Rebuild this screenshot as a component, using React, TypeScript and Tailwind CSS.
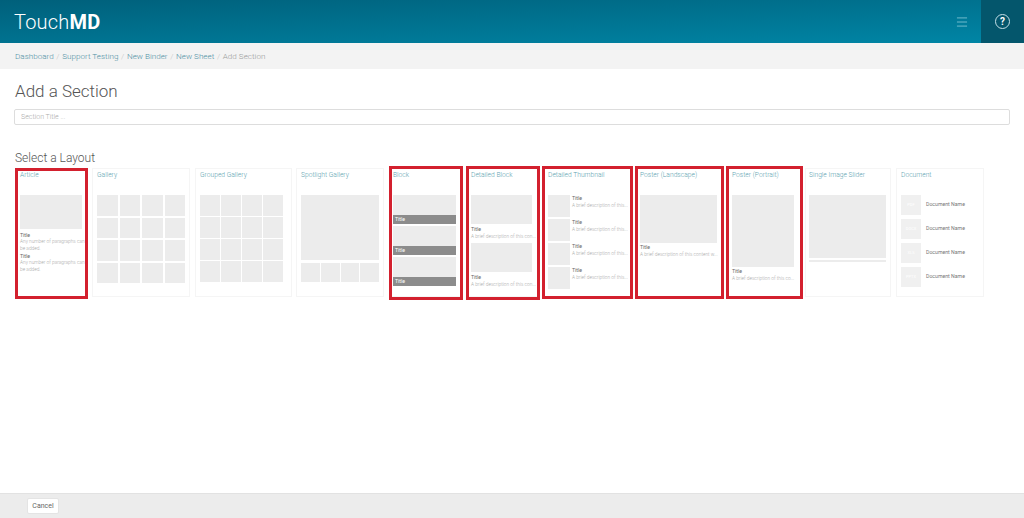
import { Menu } from 'lucide-react';

const font = { fontFamily: 'Roboto, "Liberation Sans", sans-serif' };

function Title({ children }: { children: string }) {
  return <p className="text-[5.2px] leading-[7px] text-[#666]">{children}</p>;
}

function Desc({ children }: { children: string }) {
  return <p className="text-[4.8px] leading-[7px] text-[#aaa] font-light whitespace-nowrap">{children}</p>;
}

function Card({
  name,
  className,
  outline,
  children,
}: {
  name: string;
  className: string;
  outline?: string;
  children?: React.ReactNode;
}) {
  return (
    <div className={`relative shrink-0 h-[129px] border border-[#f5f5f5] bg-white ${className}`}>
      <p className="h-[26px] pt-[1px] text-[6.7px] leading-[10px] font-light text-[#5d9fb0] whitespace-nowrap">{name}</p>
      {children}
      {outline && <div className={`absolute border-[3px] border-[#d3202e] ${outline}`} />}
    </div>
  );
}

const DOC_TYPES = ['PDF', 'DOCX', 'XLS', 'PPTX'];

function GalleryGrid() {
  return (
    <div className="grid grid-cols-4 gap-[2px]">
      {Array.from({ length: 16 }).map((_, i) => (
        <div key={i} className="h-[20.5px] bg-[#ececec]" />
      ))}
    </div>
  );
}

export default function App() {
  const crumbs = ['Dashboard', 'Support Testing', 'New Binder', 'New Sheet'];
  return (
    <div className="h-screen flex flex-col bg-white overflow-hidden" style={font}>
      {/* HEADER */}
      <header className="h-[43px] shrink-0 flex items-center justify-between bg-gradient-to-br from-[#00607b] to-[#0086a6]">
        <div className="pl-[14px] text-[20px] text-white font-light tracking-[0.2px]">
          Touch<span className="font-bold">MD</span>
        </div>
        <div className="flex items-center h-full">
          <Menu size={14} strokeWidth={1.5} className="text-[#7fc3d3] mr-[12px]" />
          <div className="w-[43px] h-full flex items-center justify-center bg-[#04566c]">
            <div className="w-[15px] h-[15px] rounded-full border border-[#c5e0e8] flex items-center justify-center text-[10px] font-bold text-white">
              ?
            </div>
          </div>
        </div>
      </header>

      {/* BREADCRUMB */}
      <nav className="h-[26px] shrink-0 flex items-center px-[15px] bg-[#f3f3f3] text-[8.1px] font-light whitespace-nowrap">
        {crumbs.map((c) => (
          <span key={c} className="flex">
            <span className="text-[#4f90a4]">{c}</span>
            <span className="w-[8.5px] text-center text-[#c4c4c4]">/</span>
          </span>
        ))}
        <span className="text-[#999]">Add Section</span>
      </nav>

      {/* CONTENT */}
      <main className="flex-1 pl-[15px] pr-[14px]">
        <h1 className="pt-[11px] text-[17px] leading-[22px] font-light text-[#555]">Add a Section</h1>
        <input
          placeholder="Section Title ..."
          className="mt-[7px] block w-[996px] -ml-[1px] h-[16px] px-[6px] border border-[#ddd] rounded-[2px] text-[7px] font-light placeholder:text-[#aaa] outline-none"
        />
        <h2 className="mt-[26px] text-[12px] leading-[15px] font-light text-[#555]">Select a Layout</h2>

        <div className="mt-[2px] flex pl-[1px]">
          <Card name="Article" className="w-[72px] mr-[4px] pl-[3px]" outline="-left-[2px] -top-[1px] -right-[1px] -bottom-[3px]">
            <div className="w-[62px] h-[34px] bg-[#ececec] mb-[3px]" />
            <div className="w-[65px]">
              <Title>Title</Title>
              <p className="text-[4.8px] leading-[6.5px] text-[#aaa] font-light">Any number of paragraphs can be added.</p>
              <div className="mt-[1px]">
                <Title>Title</Title>
              </div>
              <p className="text-[4.8px] leading-[6.5px] text-[#aaa] font-light">Any number of paragraphs can be added.</p>
            </div>
          </Card>

          <Card name="Gallery" className="w-[98px] mr-[5px] px-[4px]">
            <GalleryGrid />
          </Card>

          <Card name="Grouped Gallery" className="w-[97px] mr-[4px] pl-[4px] pr-[8px]">
            <div className="grid grid-cols-4 gap-x-[1px] gap-y-[1.5px]">
              {Array.from({ length: 16 }).map((_, i) => (
                <div key={i} className="h-[20.5px] bg-[#ececec]" />
              ))}
            </div>
          </Card>

          <Card name="Spotlight Gallery" className="w-[88px] mr-[7px] px-[4px]">
            <div className="h-[65px] bg-[#ececec]" />
            <div className="mt-[3px] grid grid-cols-4 gap-[1px]">
              {[0, 1, 2, 3].map((i) => (
                <div key={i} className="h-[19px] bg-[#ececec]" />
              ))}
            </div>
          </Card>

          <Card name="Block" className="w-[71px] mr-[4px] pl-[1px] pr-[5px]" outline="-left-[3px] -top-[3px] -right-[2px] -bottom-[4px]">
            <div className="flex flex-col gap-[2px]">
              {[0, 1, 2].map((i) => (
                <div key={i} className="h-[29px] flex flex-col justify-end bg-[#ececec]">
                  <div className="h-[9px] px-[2px] bg-[#8c8c8c] text-[5.2px] leading-[9px] text-white">Title</div>
                </div>
              ))}
            </div>
          </Card>

          <Card name="Detailed Block" className="w-[73px] mr-[4px] pl-[4px] pr-[6px]" outline="-left-[1px] -top-[3px] -right-[2px] -bottom-[4px]">
            {[0, 1].map((i) => (
              <div key={i} className="mb-[3px]">
                <div className="h-[29px] mb-[2px] bg-[#ececec]" />
                <Title>Title</Title>
                <Desc>A brief description of this con...</Desc>
              </div>
            ))}
          </Card>

          <Card name="Detailed Thumbnail" className="w-[90px] mr-[3px] pl-[4px] pr-[4px]" outline="-left-[2px] -top-[3px] -right-[1px] -bottom-[3px]">
            <div className="flex flex-col gap-[2px]">
              {[0, 1, 2, 3].map((i) => (
                <div key={i} className="flex gap-[2px]">
                  <div className="w-[22px] h-[22px] shrink-0 bg-[#ececec]" />
                  <div className="min-w-0">
                    <Title>Title</Title>
                    <Desc>A brief description of this...</Desc>
                  </div>
                </div>
              ))}
            </div>
          </Card>

          <Card name="Poster (Landscape)" className="w-[88px] mr-[3px] pl-[3px] pr-[6px]" outline="-left-[2px] -top-[3px] -right-[1px] -bottom-[3px]">
            <div className="h-[48px] mb-[1px] bg-[#ececec]" />
            <Title>Title</Title>
            <Desc>A brief description of this content w...</Desc>
          </Card>

          <Card name="Poster (Portrait)" className="w-[75px] mr-[3px] pl-[4px] pr-[7px]" outline="-left-[2px] -top-[3px] -right-[2px] -bottom-[3px]">
            <div className="h-[72px] mb-[1px] bg-[#ececec]" />
            <Title>Title</Title>
            <Desc>A brief description of this co...</Desc>
          </Card>

          <Card name="Single Image Slider" className="w-[86px] mr-[5px] pl-[3px] pr-[4px]">
            <div className="h-[63px] bg-[#ececec]" />
            <div className="mt-[2px] h-[2px] bg-[#ececec]" />
          </Card>

          <Card name="Document" className="w-[88px] pl-[4px]">
            <div className="flex flex-col gap-[4px]">
              {DOC_TYPES.map((t) => (
                <div key={t} className="flex items-center gap-[5px]">
                  <div className="w-[20px] h-[20px] flex items-center justify-center bg-[#f0f0f0] text-[4px] text-white">{t}</div>
                  <span className="text-[5.2px] text-[#777]">Document Name</span>
                </div>
              ))}
            </div>
          </Card>
        </div>
      </main>

      {/* FOOTER */}
      <footer className="h-[25px] shrink-0 flex items-center pl-[27px] bg-[#ececec] border-t border-[#e2e2e2]">
        <button className="w-[32px] h-[16px] rounded-[2px] bg-white border border-[#e4e4e4] text-[7px] text-[#666]">Cancel</button>
      </footer>
    </div>
  );
}
